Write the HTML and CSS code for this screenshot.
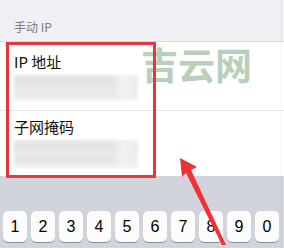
FILE: index.html
```html
<!DOCTYPE html>
<html lang="zh">
<head>
<meta charset="utf-8">
<link rel="stylesheet" href="styles.css">
</head>
<body>
<div class="screen">
  <div class="header"><span class="section-title">手动 IP</span></div>
  <div class="form">
    <div class="row row-first">
      <div class="label">IP 地址</div>
      <div class="blur blur-a"></div>
    </div>
    <div class="row row-second">
      <div class="label">子网掩码</div>
      <div class="blur blur-b"></div>
    </div>
  </div>
  <div class="keyboard">
    <div class="key">1</div><div class="key">2</div><div class="key">3</div><div class="key">4</div><div class="key">5</div>
    <div class="key">6</div><div class="key">7</div><div class="key">8</div><div class="key">9</div><div class="key">0</div>
  </div>
  <div class="edge"></div>
  <div class="watermark">吉云网</div>
  <div class="highlight"></div>
  <svg class="arrow" width="284" height="248" viewBox="0 0 284 248">
    <polygon points="180,158 197,167 191,170 226,245 222,245 186,173 182,177" fill="#ee3236"/>
  </svg>
</div>
</body>
</html>
```
FILE: styles.css
```css
html, body {
  margin: 0;
  padding: 0;
}
body {
  width: 284px;
  height: 248px;
  overflow: hidden;
  font-family: "Noto Sans CJK SC", "Liberation Sans", sans-serif;
  background: #ffffff;
}
.screen {
  position: relative;
  width: 284px;
  height: 248px;
  overflow: hidden;
}
.header {
  height: 41px;
  background: #efeff4;
  border-bottom: 1px solid #dcdce0;
  box-sizing: content-box;
  padding-left: 14px;
  display: flex;
  align-items: flex-end;
}
.section-title {
  font-size: 12px;
  line-height: 14px;
  color: #7d7d82;
  padding-bottom: 7px;
}
.form {
  height: 134px;
  background: #ffffff;
  display: flex;
  flex-direction: column;
}
.row {
  padding-left: 14px;
  display: flex;
  flex-direction: column;
}
.row-first {
  height: 58px;
  padding-top: 10px;
  border-bottom: 1px solid #e6e6e8;
}
.row-second {
  padding-top: 6px;
}
.label {
  font-size: 15px;
  line-height: 20px;
  color: #111111;
}
.blur {
  width: 124px;
  margin-top: 3px;
  border-radius: 2px;
  filter: blur(1.5px);
  background:
    linear-gradient(90deg, rgba(255,255,255,0) 0, rgba(255,255,255,0) 80%, rgba(244,244,244,0.9) 88%, rgba(238,238,238,0.7) 100%),
    linear-gradient(180deg, #e6e6e6 0, #e4e4e4 35%, #eaeaea 50%, #e6e6e6 65%, #eaeaea 82%, #f3f3f3 100%);
}
.blur-a {
  height: 26px;
}
.blur-b {
  height: 28px;
}
.keyboard {
  height: 72px;
  background: #d1d4da;
  display: flex;
  gap: 4px;
  padding: 35px 0 0 3px;
  box-sizing: border-box;
}
.key {
  width: 24px;
  height: 31px;
  background: #fcfcfd;
  border-radius: 5px;
  box-shadow: 0 1px 0 #8d9096;
  font-family: "Liberation Sans", sans-serif;
  font-size: 16px;
  line-height: 31px;
  text-align: center;
  color: #000000;
}
.edge {
  position: absolute;
  left: 281px;
  top: 0;
  width: 1px;
  height: 248px;
  background: rgba(0,0,0,0.04);
}
.watermark {
  position: absolute;
  left: 141px;
  top: 40px;
  font-size: 37px;
  line-height: 48px;
  font-weight: 700;
  color: #b9cfba;
  white-space: nowrap;
}
.highlight {
  position: absolute;
  left: 6px;
  top: 42px;
  width: 150px;
  height: 136px;
  box-sizing: border-box;
  border: 3px solid #e5383d;
}
.arrow {
  position: absolute;
  left: 0;
  top: 0;
}
```
